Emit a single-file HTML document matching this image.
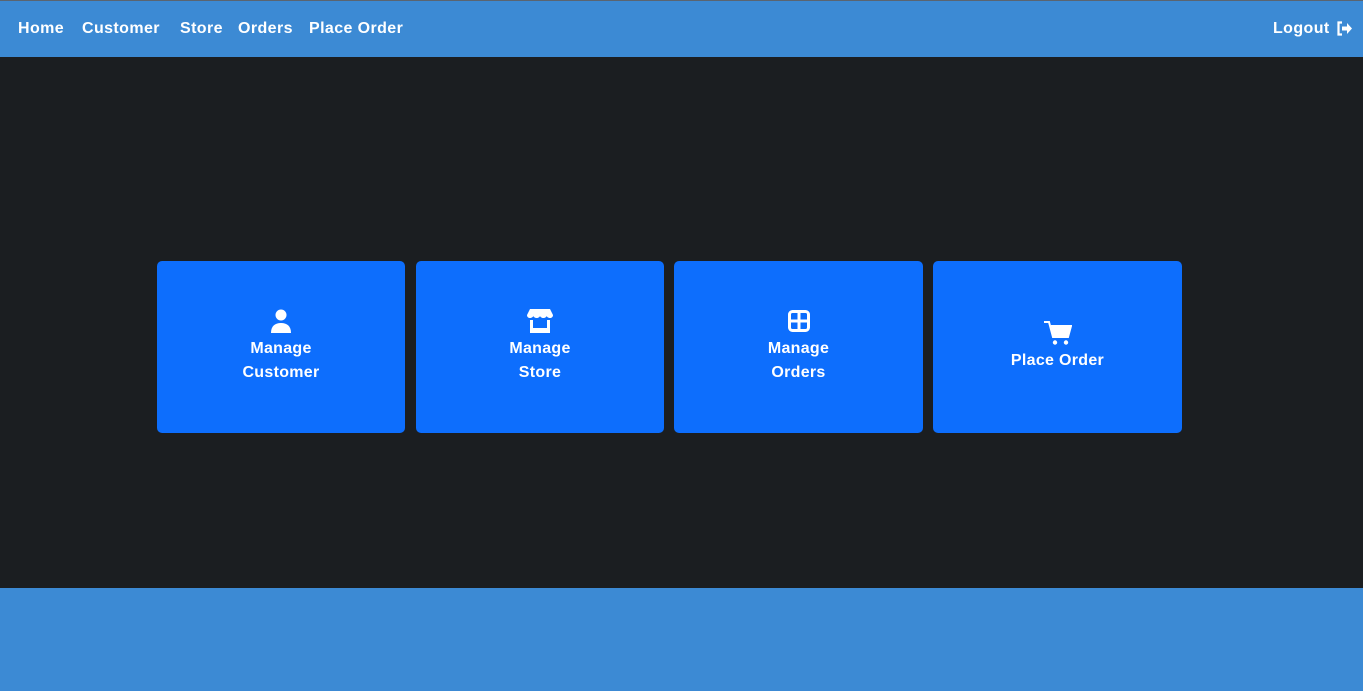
<!DOCTYPE html>
<html><head><style>
*{margin:0;padding:0;box-sizing:border-box}
body{width:1363px;height:691px;overflow:hidden;font-family:"Liberation Sans",sans-serif;background:#1b1e21;position:relative}
.top{position:absolute;left:0;top:0;width:1363px;height:1px;background:#5a6470}
nav{position:absolute;left:0;top:1px;width:1363px;height:56px;background:#3c8ad4;color:#fff;font-weight:bold;font-size:16px}
nav span{position:absolute;top:19px;letter-spacing:0.4px}
footer{position:absolute;left:0;top:588px;width:1363px;height:103px;background:#3c8ad4}
.card{position:absolute;top:261px;height:172px;background:#0d6efd;border-radius:5px;color:#fff;font-weight:bold;font-size:16px;text-align:center;letter-spacing:0.3px}
.card svg{position:absolute;left:50%;transform:translateX(-50%)}
.card .t{position:absolute;left:0;right:0;line-height:24px}
</style></head><body>
<div class="top"></div>
<nav>
<span style="left:18px">Home</span>
<span style="left:82px">Customer</span>
<span style="left:180px">Store</span>
<span style="left:238px">Orders</span>
<span style="left:309px">Place Order</span>
<span style="left:1273px">Logout</span>
<svg style="position:absolute;left:1336px;top:20px" width="17" height="15" viewBox="0 0 17 15"><path d="M6 1.5H2.5v12H6" fill="none" stroke="#fff" stroke-width="2.2"/><path d="M6 5.5h5V2l5 5.5-5 5.5V9.5H6z" fill="#fff"/></svg>
</nav>
<div class="card" style="left:157px;width:248px">
<svg style="top:48px" width="22" height="24" viewBox="0 0 22 24"><circle cx="11" cy="6" r="5.5" fill="#fff"/><path d="M1 24c0-7 4-10 10-10s10 3 10 10z" fill="#fff"/></svg>
<div class="t" style="top:76px">Manage<br>Customer</div></div>
<div class="card" style="left:416px;width:248px">
<svg style="top:48px" width="26" height="24" viewBox="0 0 26 24"><path d="M3 0h20l3 6c0 2-1.5 3-3 3s-3-1-3.3-2c-.3 1-1.7 2-3.3 2S13.3 8 13 7c-.3 1-1.7 2-3.3 2S6.6 8 6.3 7C6 8 4.5 9 3 9S0 8 0 6z" fill="#fff"/><path d="M3 11v13h20V11h-3v8H6v-8z" fill="#fff"/></svg>
<div class="t" style="top:76px">Manage<br>Store</div></div>
<div class="card" style="left:674px;width:249px">
<svg style="top:49px" width="22" height="22" viewBox="0 0 22 22"><rect x="1.5" y="1.5" width="19" height="19" rx="3" fill="none" stroke="#fff" stroke-width="3"/><path d="M11 1v20M1 11h20" stroke="#fff" stroke-width="3"/></svg>
<div class="t" style="top:76px">Manage<br>Orders</div></div>
<div class="card" style="left:933px;width:249px">
<svg style="top:60px" width="28" height="24" viewBox="0 0 28 24"><path d="M0 1h5l4 15h15l3-11H7" fill="none" stroke="#fff" stroke-width="2"/><path d="M7 5h20l-3 11H9z" fill="#fff"/><circle cx="11" cy="21.5" r="2.2" fill="#fff"/><circle cx="22" cy="21.5" r="2.2" fill="#fff"/></svg>
<div class="t" style="top:88px">Place Order</div></div>
<footer></footer>
</body></html>
